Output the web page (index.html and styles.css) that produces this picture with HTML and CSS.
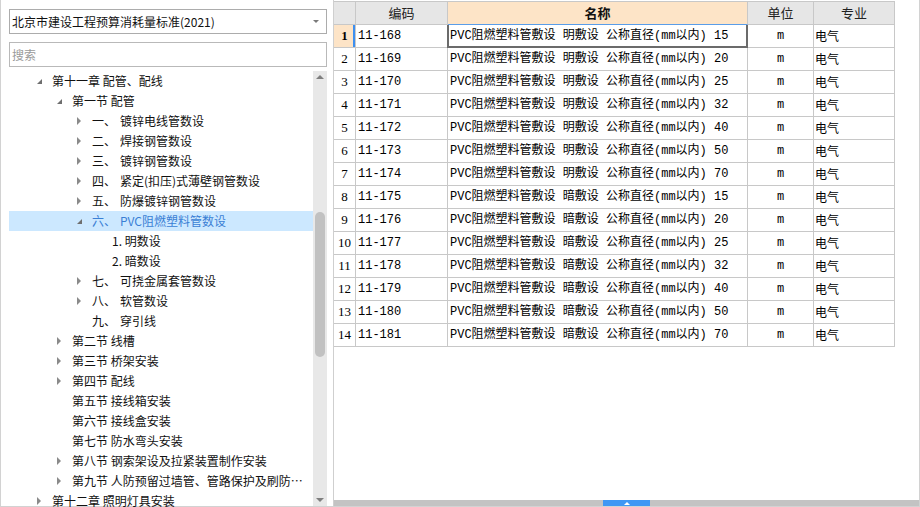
FILE: index.html
```html
<!DOCTYPE html>
<html lang="zh-CN">
<head>
<meta charset="utf-8">
<title>定额库</title>
<link rel="stylesheet" href="styles.css">
</head>
<body>
<div class="app">
  <aside class="side">
    <div class="select"><span class="select-text">北京市建设工程预算消耗量标准(2021)</span><span class="caret"></span></div>
    <div class="search">搜索</div>
    <div class="tree-wrap">
      <div class="tree">
        <div class="node l0"><span class="tw open"></span><span class="lbl">第十一章 配管、配线</span></div>
        <div class="node l1"><span class="tw open"></span><span class="lbl">第一节 配管</span></div>
        <div class="node l2"><span class="tw closed"></span><span class="num">一、</span><span class="lbl">镀锌电线管数设</span></div>
        <div class="node l2"><span class="tw closed"></span><span class="num">二、</span><span class="lbl">焊接钢管数设</span></div>
        <div class="node l2"><span class="tw closed"></span><span class="num">三、</span><span class="lbl">镀锌钢管数设</span></div>
        <div class="node l2"><span class="tw closed"></span><span class="num">四、</span><span class="lbl">紧定(扣压)式薄壁钢管数设</span></div>
        <div class="node l2"><span class="tw closed"></span><span class="num">五、</span><span class="lbl">防爆镀锌钢管数设</span></div>
        <div class="node l2 active"><span class="tw open"></span><span class="num">六、</span><span class="lbl">PVC阻燃塑料管数设</span></div>
        <div class="node l3"><span class="tw"></span><span class="lbl">1. 明数设</span></div>
        <div class="node l3"><span class="tw"></span><span class="lbl">2. 暗数设</span></div>
        <div class="node l2"><span class="tw closed"></span><span class="num">七、</span><span class="lbl">可挠金属套管数设</span></div>
        <div class="node l2"><span class="tw closed"></span><span class="num">八、</span><span class="lbl">软管数设</span></div>
        <div class="node l2"><span class="tw"></span><span class="num">九、</span><span class="lbl">穿引线</span></div>
        <div class="node l1"><span class="tw closed"></span><span class="lbl">第二节 线槽</span></div>
        <div class="node l1"><span class="tw closed"></span><span class="lbl">第三节 桥架安装</span></div>
        <div class="node l1"><span class="tw closed"></span><span class="lbl">第四节 配线</span></div>
        <div class="node l1"><span class="tw"></span><span class="lbl">第五节 接线箱安装</span></div>
        <div class="node l1"><span class="tw"></span><span class="lbl">第六节 接线盒安装</span></div>
        <div class="node l1"><span class="tw"></span><span class="lbl">第七节 防水弯头安装</span></div>
        <div class="node l1"><span class="tw closed"></span><span class="lbl">第八节 钢索架设及拉紧装置制作安装</span></div>
        <div class="node l1"><span class="tw closed"></span><span class="lbl">第九节 人防预留过墙管、管路保护及刷防火涂料</span></div>
        <div class="node l0"><span class="tw closed"></span><span class="lbl">第十二章 照明灯具安装</span></div>
      </div>
      <div class="vscroll">
        <span class="arrow up"></span>
        <span class="track"><span class="thumb"></span></span>
        <span class="arrow down"></span>
      </div>
    </div>
  </aside>
  <main class="pane">
    <div class="grid">
      <div class="row head">
        <div class="c rn"></div>
        <div class="c code">编码</div>
        <div class="c name sel">名称</div>
        <div class="c unit">单位</div>
        <div class="c spec">专业</div>
      </div>
      <div class="row cur-row">
        <div class="c rn">1</div><div class="c code">11-168</div><div class="c name cur">PVC阻燃塑料管敷设 明敷设 公称直径(mm以内) 15</div><div class="c unit">m</div><div class="c spec">电气</div>
      </div>
      <div class="row"><div class="c rn">2</div><div class="c code">11-169</div><div class="c name">PVC阻燃塑料管敷设 明敷设 公称直径(mm以内) 20</div><div class="c unit">m</div><div class="c spec">电气</div></div>
      <div class="row"><div class="c rn">3</div><div class="c code">11-170</div><div class="c name">PVC阻燃塑料管敷设 明敷设 公称直径(mm以内) 25</div><div class="c unit">m</div><div class="c spec">电气</div></div>
      <div class="row"><div class="c rn">4</div><div class="c code">11-171</div><div class="c name">PVC阻燃塑料管敷设 明敷设 公称直径(mm以内) 32</div><div class="c unit">m</div><div class="c spec">电气</div></div>
      <div class="row"><div class="c rn">5</div><div class="c code">11-172</div><div class="c name">PVC阻燃塑料管敷设 明敷设 公称直径(mm以内) 40</div><div class="c unit">m</div><div class="c spec">电气</div></div>
      <div class="row"><div class="c rn">6</div><div class="c code">11-173</div><div class="c name">PVC阻燃塑料管敷设 明敷设 公称直径(mm以内) 50</div><div class="c unit">m</div><div class="c spec">电气</div></div>
      <div class="row"><div class="c rn">7</div><div class="c code">11-174</div><div class="c name">PVC阻燃塑料管敷设 明敷设 公称直径(mm以内) 70</div><div class="c unit">m</div><div class="c spec">电气</div></div>
      <div class="row"><div class="c rn">8</div><div class="c code">11-175</div><div class="c name">PVC阻燃塑料管敷设 暗敷设 公称直径(mm以内) 15</div><div class="c unit">m</div><div class="c spec">电气</div></div>
      <div class="row"><div class="c rn">9</div><div class="c code">11-176</div><div class="c name">PVC阻燃塑料管敷设 暗敷设 公称直径(mm以内) 20</div><div class="c unit">m</div><div class="c spec">电气</div></div>
      <div class="row"><div class="c rn">10</div><div class="c code">11-177</div><div class="c name">PVC阻燃塑料管敷设 暗敷设 公称直径(mm以内) 25</div><div class="c unit">m</div><div class="c spec">电气</div></div>
      <div class="row"><div class="c rn">11</div><div class="c code">11-178</div><div class="c name">PVC阻燃塑料管敷设 暗敷设 公称直径(mm以内) 32</div><div class="c unit">m</div><div class="c spec">电气</div></div>
      <div class="row"><div class="c rn">12</div><div class="c code">11-179</div><div class="c name">PVC阻燃塑料管敷设 暗敷设 公称直径(mm以内) 40</div><div class="c unit">m</div><div class="c spec">电气</div></div>
      <div class="row"><div class="c rn">13</div><div class="c code">11-180</div><div class="c name">PVC阻燃塑料管敷设 暗敷设 公称直径(mm以内) 50</div><div class="c unit">m</div><div class="c spec">电气</div></div>
      <div class="row"><div class="c rn">14</div><div class="c code">11-181</div><div class="c name">PVC阻燃塑料管敷设 暗敷设 公称直径(mm以内) 70</div><div class="c unit">m</div><div class="c spec">电气</div></div>
    </div>
    <div class="spacer"></div>
    <div class="hscroll"><span class="grip"></span></div>
  </main>
</div>
</body>
</html>
```

FILE: styles.css
```css
* { box-sizing: border-box; }
html, body { margin: 0; padding: 0; background: #fff; }
body {
  width: 920px;
  height: 507px;
  overflow: hidden;
  font-family: "Noto Sans CJK SC", "Liberation Sans", sans-serif;
  font-size: 12px;
  color: #000;
}
.app {
  display: flex;
  width: 920px;
  height: 507px;
  border-left: 1px solid #d2d2d2;
  border-right: 1px solid #d2d2d2;
  border-bottom: 1px solid #d2d2d2;
}

/* ---------- left side ---------- */
.side {
  width: 333px;
  flex: none;
  display: flex;
  flex-direction: column;
  padding: 9px 6px 0 8px;
  border-right: 1px solid #cfcfcf;
}
.select {
  height: 25px;
  border: 1px solid #acacac;
  display: flex;
  align-items: center;
  padding: 0 7px 0 2px;
  justify-content: space-between;
}
.select-text {
  font-size: 12px;
  color: #111;
  line-height: 20px;
}
.caret {
  width: 0;
  height: 0;
  border-left: 3px solid transparent;
  border-right: 3px solid transparent;
  border-top: 3px solid #7a7a7a;
}
.search {
  margin-top: 8px;
  height: 25px;
  border: 1px solid #b9b9b9;
  padding-left: 2px;
  line-height: 23px;
  color: #9a9a9a;
  font-size: 12px;
}
.tree-wrap {
  margin-top: 4px;
  flex: 1;
  min-height: 0;
  display: flex;
}
.tree {
  flex: 1;
  min-width: 0;
}
.node {
  height: 20px;
  display: flex;
  align-items: center;
  white-space: nowrap;
  line-height: 20px;
  padding-right: 10px;
  color: #111;
}
.node.l0 { padding-left: 28px; }
.node.l1 { padding-left: 48px; }
.node.l2 { padding-left: 68px; }
.node.l3 { padding-left: 88px; }
.node.active {
  background: #cce8ff;
  color: #3a7fd5;
}
.tw {
  width: 15px;
  flex: none;
  height: 20px;
  position: relative;
}
.tw.closed::before {
  content: "";
  position: absolute;
  left: 0;
  top: 6px;
  border-top: 4px solid transparent;
  border-bottom: 4px solid transparent;
  border-left: 4px solid #8a8a8a;
}
.tw.open::before {
  content: "";
  position: absolute;
  left: 0;
  top: 8px;
  border-left: 5px solid transparent;
  border-bottom: 5px solid #6f6f6f;
}
.num {
  width: 28px;
  flex: none;
}
.lbl {
  overflow: hidden;
  text-overflow: ellipsis;
}
.vscroll {
  width: 14px;
  flex: none;
  background: #e8e8e8;
  display: flex;
  flex-direction: column;
  align-items: center;
}
.arrow {
  height: 12px;
  width: 14px;
  display: flex;
  align-items: center;
  justify-content: center;
  flex: none;
}
.arrow::before {
  content: "";
  border-left: 4px solid transparent;
  border-right: 4px solid transparent;
}
.arrow.up::before { border-bottom: 4px solid #7f7f7f; }
.arrow.down::before { border-top: 4px solid #7f7f7f; }
.track {
  flex: 1;
  width: 14px;
  display: flex;
  flex-direction: column;
  align-items: center;
}
.thumb {
  margin-top: 129px;
  width: 10px;
  height: 145px;
  border-radius: 5px;
  background: #c1c1c1;
}

/* ---------- right pane ---------- */
.pane {
  flex: 1;
  min-width: 0;
  display: flex;
  flex-direction: column;
}
.grid {
  margin-top: 1px;
}
.row {
  display: grid;
  grid-template-columns: 22px 92px 300px 66px 81px;
  height: 23px;
}
.c {
  border-right: 1px solid #c8c8c8;
  border-bottom: 1px solid #c8c8c8;
  white-space: nowrap;
  overflow: hidden;
  line-height: 22px;
  font-family: "Liberation Mono", "Noto Sans CJK SC", monospace;
  font-size: 12px;
  padding-left: 2px;
}
.c.rn {
  font-family: "Liberation Serif", "Noto Sans CJK SC", serif;
  font-size: 13px;
  text-align: center;
  padding-left: 0;
}
.c.unit { text-align: center; padding-left: 0; }
.c.spec {
  padding-left: 1px;
  font-family: "Noto Sans CJK SC", sans-serif;
}
.row.head { height: 24px; }
.head .c {
  border-top: 1px solid #c8c8c8;
  background: #e6e6e6;
  text-align: center;
  font-family: "Noto Sans CJK SC", sans-serif;
  font-size: 13px;
  line-height: 21px;
  padding-left: 0;
  color: #222;
}
.head .c.sel {
  background: #fde4c7;
  font-weight: bold;
  border-bottom-color: #5a9de8;
  color: #111;
}
.cur-row .c.rn {
  background: #fde4c7;
  font-weight: bold;
  box-shadow: inset -2px 0 0 #3d8ff0;
}
.c.cur {
  position: relative;
  overflow: visible;
}
.c.cur::after {
  content: "";
  position: absolute;
  left: -1px;
  right: -1px;
  top: 0;
  bottom: -1px;
  border: 2px solid #6b6b6b;
  border-top: none;
}
.spacer { flex: 1; }
.hscroll {
  height: 6px;
  background: #c3c3c3;
  display: flex;
}
.grip {
  margin-left: 269px;
  width: 47px;
  height: 6px;
  background: #3f97f4;
  display: flex;
  align-items: center;
  justify-content: center;
}
.grip::before {
  content: "";
  border-left: 3px solid transparent;
  border-right: 3px solid transparent;
  border-bottom: 3px solid #fff;
}
```
